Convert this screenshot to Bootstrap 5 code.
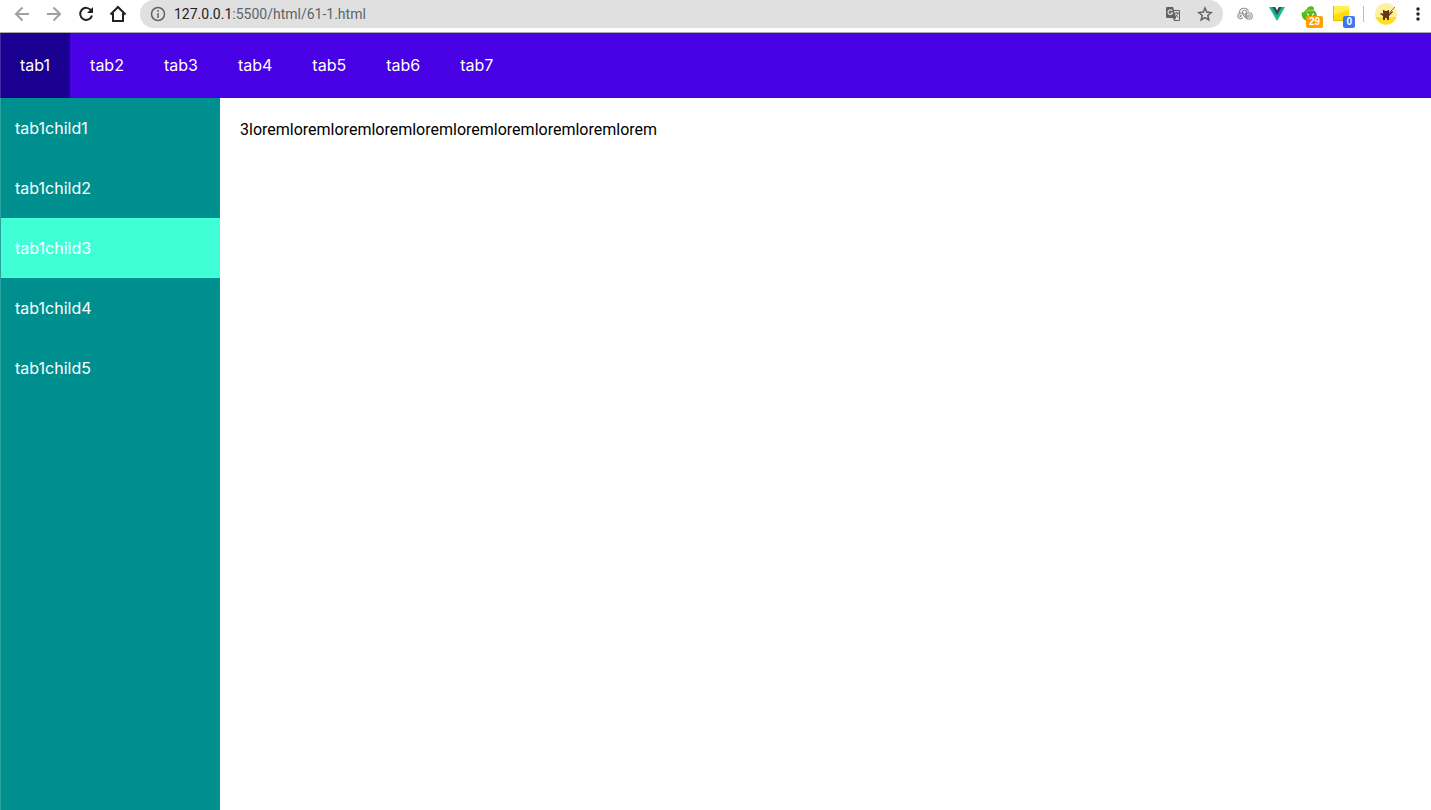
<!DOCTYPE html>
<html lang="en">
<head>
<meta charset="utf-8">
<meta name="viewport" content="width=device-width, initial-scale=1">
<title>61-1.html</title>
<link href="https://cdn.jsdelivr.net/npm/bootstrap@5.3.0/dist/css/bootstrap.min.css" rel="stylesheet">
<style>
  body { font: 16px/24px "Inter", "Liberation Sans", sans-serif; color: #000; }
  .browser-bar { height: 33px; border-bottom: 1px solid #a9a9a9; background: #fff; }
  .tool { width: 32px; height: 28px; padding: 0; border: 0; background: none; display: flex; align-items: center; justify-content: center; color: #202124; position: relative; }
  .tool svg { display: block; }
  .tool:disabled { color: #a0a0a0; }
  .nav-tools { width: 140px; padding-left: 6px; }
  .ext-tools { padding-left: 6px; }
  .menu-tool { width: 29px; justify-content: flex-end; padding-right: 11px; }
  .address { height: 28px; background: #e0e0e0; border-radius: 14px; padding: 0 2px 0 10px; color: #5f6368; }
  .address .tool { color: #5f6368; }
  .url { font: 14px/28px "Roboto", sans-serif; color: #5f6368; }
  .url b { font-weight: 400; color: #202124; }
  .counter { position: absolute; right: 2px; bottom: 0; font: 700 10px/12px "Liberation Sans", sans-serif; color: #fff; border-radius: 2px; padding: 0 3px; background: #ffa000; }
  .counter.blue { background: #3b78f6; }
  .divider { width: 1px; height: 16px; background: #bdbdbd; margin: 0 6px; }
  .top-tabs { background: #4800e5; }
  .top-tabs .nav-link { padding: 0 20px; line-height: 65px; color: #fff; border-radius: 0; }
  .top-tabs .nav-link.active { background: #1a0091; }
  .top-tabs li:first-child .nav-link { border-left: 1px solid #3f2b9b; padding-left: 19px; }
  .side { width: 220px; background: #008f8f; border-left: 1px solid #2da0a0; }
  .side .nav-link { padding: 0 14px; line-height: 60px; color: #fff; }
  .side .nav-link.active { background: #40ffd6; }
  .content { padding: 20px; font-family: "Roboto", sans-serif; }
</style>
</head>
<body class="d-flex flex-column min-vh-100">
<header class="browser-bar d-flex align-items-start flex-shrink-0">
  <div class="nav-tools d-flex flex-shrink-0">
    <button class="tool" disabled aria-label="Back"><svg width="16" height="16" viewBox="0 0 16 16" fill="none" stroke="currentColor" stroke-width="2"><path d="M15 8H2M8.500 1.500 2 8l6.500 6.500"/></svg></button>
    <button class="tool" disabled aria-label="Forward"><svg width="16" height="16" viewBox="0 0 16 16" fill="none" stroke="currentColor" stroke-width="2"><path d="M1 8h13M7.500 1.500 14 8l-6.500 6.500"/></svg></button>
    <button class="tool" aria-label="Reload"><svg width="16" height="16" viewBox="0 0 16 16" fill="none" stroke="currentColor" stroke-width="2"><path d="M13.200 4.500A6 6 0 1 0 14 9.500"/><path d="M15 1v6H9z" fill="currentColor" stroke="none"/></svg></button>
    <button class="tool" aria-label="Home"><svg width="18" height="18" viewBox="0 0 18 18" fill="none" stroke="currentColor" stroke-width="2"><path d="M1.500 9.500 9 2l7.500 7.500M4 8v8h10V8"/></svg></button>
  </div>
  <div class="address d-flex align-items-center flex-grow-1">
    <svg width="16" height="16" viewBox="0 0 16 16" fill="none" stroke="currentColor" stroke-width="1.500"><circle cx="8" cy="8" r="6.500"/><path d="M8 7v5M8 4v1.700"/></svg>
    <span class="url ms-2 me-auto"><b>127.0.0.1</b>:5500/html/61-1.html</span>
    <button class="tool" aria-label="Translate"><svg width="16" height="16" viewBox="0 0 16 16"><path d="M2 1h6l1 3h5a1 1 0 0 1 1 1v9a1 1 0 0 1-1 1H9l-1-3H2a1 1 0 0 1-1-1V2a1 1 0 0 1 1-1z" fill="#5f6368"/><path d="M9 5h5v9H9.500l1.500-2z" fill="#e0e0e0"/><path d="M7.300 5A2.300 2.300 0 1 0 7.500 7H5.500" fill="none" stroke="#e0e0e0" stroke-width="1.200"/><path d="M9.500 7H14M11.700 6v1M13 7c-.4 2-1.500 3-3 4M10.500 8.500l2.500 3" fill="none" stroke="#5f6368"/></svg></button>
    <button class="tool" aria-label="Bookmark"><svg width="16" height="16" viewBox="0 0 16 16" fill="none" stroke="currentColor" stroke-width="1.500"><path d="m8 2 1.700 4.100 4.500.4-3.400 3 1 4.400L8 11.600l-3.800 2.300 1-4.400-3.400-3 4.500-.4z"/></svg></button>
  </div>
  <div class="ext-tools d-flex align-items-center flex-shrink-0">
    <button class="tool" aria-label="Links extension"><svg width="16" height="16" viewBox="0 0 16 16" fill="none" stroke="#929292" stroke-width="1.100"><path d="M2.500 7A4.600 4.600 0 0 1 11.500 5.500"/><path d="M5.800 11.600A2.800 2.800 0 1 1 6 8.500L8.500 12"/><circle cx="7.500" cy="6.300" r="2"/><path d="m8.700 8 1.500 4.600"/><circle cx="12" cy="10" r="3.300"/><circle cx="12" cy="10" r="1.300"/><circle cx="3.500" cy="10" r=".7"/></svg></button>
    <button class="tool" aria-label="Vue devtools"><svg width="16" height="16" viewBox="0 0 16 16"><path d="M0 1h3.500L8 9l4.500-8H16L8 15z" fill="#13bd84"/><path d="M3.200 1h3L8 4.200 9.800 1h3L8 9.500z" fill="#35495e"/></svg></button>
    <button class="tool" aria-label="Downloads extension"><svg width="16" height="16" viewBox="0 0 16 16"><path d="M6 3c0-3 6-4 7-1 0 1-1 2-1 2 3 1 4 4 4 7H7l-1 4C2 14 0 10 1 6c1 0 2 0 2 1 0-2 1-3 3-4z" fill="#55bb20"/><path d="M5 6c2-2 5-2 7-1" fill="none" stroke="#8bd34e" stroke-width="1.500"/><path d="m6 8 2 1M11 9l2-1M7 11h3" fill="none" stroke="#e3f8d0" stroke-width="1.500"/></svg><span class="counter">29</span></button>
    <button class="tool" aria-label="Notes extension"><svg width="16" height="16" viewBox="0 0 16 16"><path d="M0 0h16v15H0z" fill="#ffdf00"/><path d="M0 0h16v4L0 9z" fill="#fff04d"/><path d="M0 14.500h16M.5 0v15" stroke="#e5bd00"/></svg><span class="counter blue">0</span></button>
    <span class="divider"></span>
    <button class="tool" aria-label="Profile"><svg width="22" height="22" viewBox="0 0 22 22"><circle cx="11" cy="11" r="11" fill="#fff0a0"/><path d="M.5 14h21a11 11 0 0 1-21 0z" fill="#ffde26"/><path d="M8 7h1l1 1h2l1-1h1v4l3-3 1 1-4 4v4h-2v-2h-2v2H8v-4l-3-2 1-1 2 1z" fill="#653514"/><path d="m14 10 6-6" stroke="#a87632"/></svg></button>
    <button class="tool menu-tool" aria-label="Menu"><svg width="4" height="16" viewBox="0 0 4 16" fill="#202124"><circle cx="2" cy="3" r="1.700"/><circle cx="2" cy="8" r="1.700"/><circle cx="2" cy="13" r="1.700"/></svg></button>
  </div>
</header>
<nav class="top-tabs flex-shrink-0" aria-label="Tabs">
  <ul class="nav">
    <li class="nav-item"><a class="nav-link active" href="#">tab1</a></li>
    <li class="nav-item"><a class="nav-link" href="#">tab2</a></li>
    <li class="nav-item"><a class="nav-link" href="#">tab3</a></li>
    <li class="nav-item"><a class="nav-link" href="#">tab4</a></li>
    <li class="nav-item"><a class="nav-link" href="#">tab5</a></li>
    <li class="nav-item"><a class="nav-link" href="#">tab6</a></li>
    <li class="nav-item"><a class="nav-link" href="#">tab7</a></li>
  </ul>
</nav>
<div class="d-flex flex-grow-1">
  <nav class="side nav flex-column flex-shrink-0" aria-label="Tab 1 sections">
    <a class="nav-link" href="#">tab1child1</a>
    <a class="nav-link" href="#">tab1child2</a>
    <a class="nav-link active" href="#">tab1child3</a>
    <a class="nav-link" href="#">tab1child4</a>
    <a class="nav-link" href="#">tab1child5</a>
  </nav>
  <main class="content flex-grow-1">3loremloremloremloremloremloremloremloremloremlorem</main>
</div>
<script src="https://cdn.jsdelivr.net/npm/bootstrap@5.3.0/dist/js/bootstrap.bundle.min.js"></script>
</body>
</html>
